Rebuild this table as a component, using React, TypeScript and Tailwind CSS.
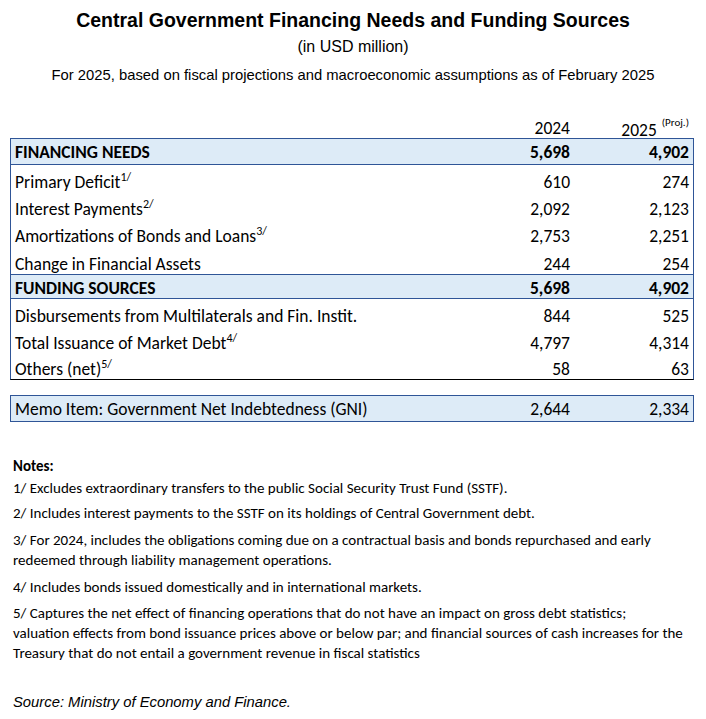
const calibri = "font-['Carlito','Lato',sans-serif]";

type Row = { label: string; note?: string; a: string; b: string; h: string };

const needs: Row[] = [
  { label: "Primary Deficit", note: "1/", a: "610", b: "274", h: "h-[27px]" },
  { label: "Interest Payments", note: "2/", a: "2,092", b: "2,123", h: "h-[27px]" },
  { label: "Amortizations of Bonds and Loans", note: "3/", a: "2,753", b: "2,251", h: "h-[27px]" },
  { label: "Change in Financial Assets", a: "244", b: "254", h: "h-[28px]" },
];

const sources: Row[] = [
  { label: "Disbursements from Multilaterals and Fin. Instit.", a: "844", b: "525", h: "h-[27px]" },
  { label: "Total Issuance of Market Debt", note: "4/", a: "4,797", b: "4,314", h: "h-[27px]" },
  { label: "Others (net)", note: "5/", a: "58", b: "63", h: "h-[26px]" },
];

function DataRow({ row }: { row: Row }) {
  return (
    <div className={`grid grid-cols-[1fr_100px_119px] items-end ${row.h}`}>
      <div className="pl-[4px] leading-[20px] whitespace-nowrap">
        {row.label}
        {row.note && <sup className="text-[12px] -top-[7px]">{row.note}</sup>}
      </div>
      <div className="pr-[4px] text-right leading-[20px]">{row.a}</div>
      <div className="pr-[4px] text-right leading-[20px]">{row.b}</div>
    </div>
  );
}

function SectionRow({ label, a, b, h }: { label: string; a: string; b: string; h: string }) {
  return (
    <div className={`grid grid-cols-[1fr_100px_119px] items-center bg-[#ddebf7] font-bold border-b border-[#2f5597] ${h}`}>
      <div className="pl-[4px]">{label}</div>
      <div className="pr-[4px] text-right">{a}</div>
      <div className="pr-[4px] text-right">{b}</div>
    </div>
  );
}

export default function App() {
  return (
    <div className="w-[706px] h-[719px] bg-white text-black overflow-hidden">
      <div className="font-['Liberation_Sans',Arial,sans-serif] text-center pt-[8px]">
        <h1 className="text-[19.5px] leading-[24px] font-bold">
          Central Government Financing Needs and Funding Sources
        </h1>
        <p className="mt-[5px] text-[16px] leading-[20px]">(in USD million)</p>
        <p className="mt-[8px] text-[14.8px] leading-[20px]">
          For 2025, based on fiscal projections and macroeconomic assumptions as of February 2025
        </p>
      </div>

      <div className={`${calibri} text-[17.5px] ml-[10px] w-[684px]`}>
        <div className="grid grid-cols-[1fr_100px_119px] items-end h-[26px] mt-[27px] px-px">
          <div />
          <div className="pr-[4px] text-right leading-[20px]">2024</div>
          <div className="pr-[4px] text-right leading-[20px] whitespace-nowrap">
            <span className="relative top-[2px]">2025</span>
            <sup className="text-[11px] -top-[8px] ml-[5px]">(Proj.)</sup>
          </div>
        </div>

        <div className="border border-[#2f5597] border-b-black">
          <SectionRow label="FINANCING NEEDS" a="5,698" b="4,902" h="h-[26px]" />
          <div className="border-b border-[#2f5597]">
            {needs.map((r) => (
              <DataRow key={r.label} row={r} />
            ))}
          </div>
          <SectionRow label="FUNDING SOURCES" a="5,698" b="4,902" h="h-[24px]" />
          {sources.map((r) => (
            <DataRow key={r.label} row={r} />
          ))}
        </div>

        <div className="mt-[15px] h-[27px] border border-[#2f5597] bg-[#ddebf7] grid grid-cols-[1fr_100px_119px] items-center">
          <div className="pl-[4px]">Memo Item: Government Net Indebtedness (GNI)</div>
          <div className="pr-[4px] text-right">2,644</div>
          <div className="pr-[4px] text-right">2,334</div>
        </div>
      </div>

      <div className={`${calibri} text-[15px] leading-[20px] pl-[13px] mt-[34px] whitespace-nowrap`}>
        <p className="font-bold">Notes:</p>
        <p className="mt-[2px]">1/ Excludes extraordinary transfers to the public Social Security Trust Fund (SSTF).</p>
        <p className="mt-[5px]">2/ Includes interest payments to the SSTF on its holdings of Central Government debt.</p>
        <p className="mt-[7px]">
          3/ For 2024, includes the obligations coming due on a contractual basis and bonds repurchased and early
          <br />
          redeemed through liability management operations.
        </p>
        <p className="mt-[7px]">4/ Includes bonds issued domestically and in international markets.</p>
        <p className="mt-[6px]">
          5/ Captures the net effect of financing operations that do not have an impact on gross debt statistics;
          <br />
          valuation effects from bond issuance prices above or below par; and financial sources of cash increases for the
          <br />
          Treasury that do not entail a government revenue in fiscal statistics
        </p>
      </div>

      <p className="font-['Liberation_Sans',Arial,sans-serif] italic text-[14.8px] leading-[20px] pl-[13px] mt-[29px]">
        Source: Ministry of Economy and Finance.
      </p>
    </div>
  );
}
